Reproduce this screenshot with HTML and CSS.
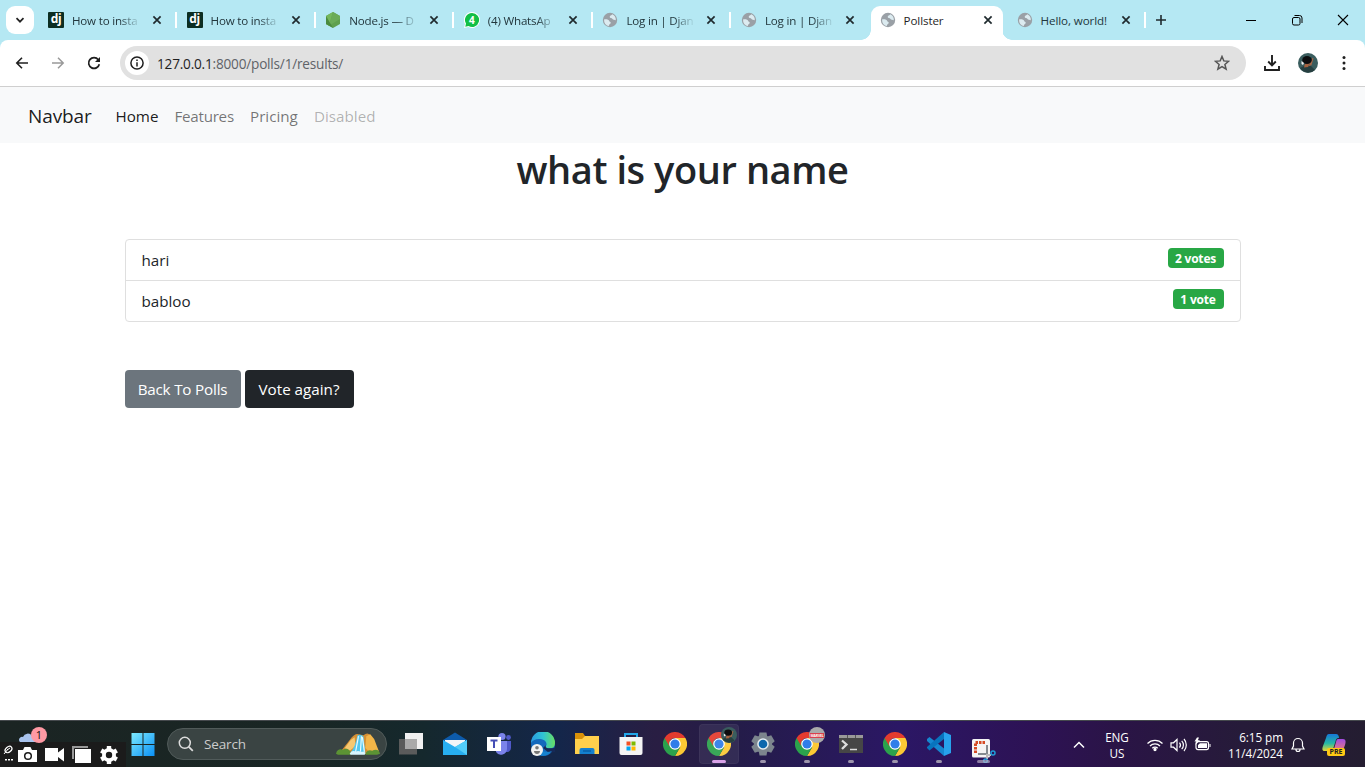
FILE: index.html
```html
<!DOCTYPE html>
<html lang="en">
<head>
<meta charset="utf-8">
<title>Pollster</title>
<link rel="stylesheet" href="styles.css">
</head>
<body>
<svg class="defs" width="0" height="0">
  <defs>
    <symbol id="close" viewBox="0 0 10 10"><path d="M1.400 1.400 8.600 8.600M8.600 1.400 1.400 8.600" fill="none" stroke="#1f2a2e" stroke-width="1.700"/></symbol>
    <symbol id="globe" viewBox="0 0 16 16"><circle cx="8" cy="8" r="7.200" fill="#9aa0a6"/><path d="M2.200 7.200C5 7 7 7.500 7.200 9c.1 1 1.600.6 1.600 1.800 0 1.200-1.800 1-2 3.200C3.600 13.600 1.700 10.500 2.200 7.200zM10.300 2.300c-.6 1.500-2.600 1.200-2.600 2.700 0 1.300 2.300.6 2.800 2 .4 1.200 2.200.4 3.300 1.300.3-2.900-1.300-5.100-3.500-6z" class="globe-land"/></symbol>
    <symbol id="chrome" viewBox="0 0 24 24">
      <path d="M22.400 6H12l5.200 9L12 24A12 12 0 0 0 22.400 6z" fill="#fcc934"/>
      <path d="M1.600 6A12 12 0 0 0 12 24l5.200-9L12 12z" fill="#2ba24c"/>
      <path d="M1.600 6A12 12 0 0 1 22.400 6H12a6 6 0 0 0-5.200 9z" fill="#e33b2e"/>
      <circle cx="12" cy="12" r="5.800" fill="#fff"/><circle cx="12" cy="12" r="4.600" fill="#2f7de9"/>
    </symbol>
    <symbol id="avatar" viewBox="0 0 20 20"><circle cx="10" cy="10" r="10" fill="#3a5d5e"/><path d="M2 15a10 10 0 0 0 15 2l-5-5-6 1z" fill="#263f40"/><path d="M6.500 12 9 8 12 10 10 14 6 14.500z" fill="#a5623f"/><path d="M12 10.500 14.500 4.800l1 .4-2 7-3 1z" fill="#a56647"/><ellipse cx="9" cy="7" rx="4.800" ry="4" fill="#0c0c0e"/><path d="m3.500 8 2.500 2-1 2-1.500-1z" fill="#eee"/></symbol>
  </defs>
</svg>

<div class="tabstrip">
  <button class="tab-search"><svg width="10" height="10" viewBox="0 0 10 10"><path d="M1.500 3.200 5 6.700l3.500-3.500" fill="none" stroke="#222" stroke-width="1.700"/></svg></button>
  <div class="tabs">
    <div class="tab"><span class="fav fav-dj">dj</span><span class="tab-title fade">How to insta</span><svg class="x"><use href="#close"/></svg></div>
    <div class="tab"><span class="fav fav-dj">dj</span><span class="tab-title fade">How to insta</span><svg class="x"><use href="#close"/></svg></div>
    <div class="tab"><svg class="fav" viewBox="0 0 16 16"><path d="M8 0 15 4v8l-7 4-7-4V4z" fill="#5fa04e"/><path d="M8 0 1 4v8l3 1.700z" fill="#74b75c"/><path d="M8 0 15 4v3L4 13.700z" fill="#6aab57"/><path d="M1 4 8 16l-7-4z" fill="#4a8a3f"/></svg><span class="tab-title fade">Node.js — D</span><svg class="x"><use href="#close"/></svg></div>
    <div class="tab"><span class="fav fav-wa"><svg viewBox="0 0 16 16"><path d="M8 0a8 8 0 1 1-3.700 15.100L0 16l1-4A8 8 0 0 1 8 0z" fill="#fff"/><path d="M8 1a7 7 0 1 1-3.500 13L1.300 14.700 2 11.600A7 7 0 0 1 8 1z" fill="#12bf45"/></svg><b>4</b></span><span class="tab-title fade">(4) WhatsAp</span><svg class="x"><use href="#close"/></svg></div>
    <div class="tab"><svg class="fav"><use href="#globe"/></svg><span class="tab-title fade">Log in | Djan</span><svg class="x"><use href="#close"/></svg></div>
    <div class="tab no-sep"><svg class="fav"><use href="#globe"/></svg><span class="tab-title fade">Log in | Djan</span><svg class="x"><use href="#close"/></svg></div>
    <div class="tab active"><svg class="fav"><use href="#globe"/></svg><span class="tab-title">Pollster</span><svg class="x"><use href="#close"/></svg></div>
    <div class="tab"><svg class="fav"><use href="#globe"/></svg><span class="tab-title">Hello, world!</span><svg class="x"><use href="#close"/></svg></div>
  </div>
  <svg class="new-tab" width="12" height="12" viewBox="0 0 12 12"><path d="M6 1v10M1 6h10" stroke="#1f2a2e" stroke-width="1.600"/></svg>
  <div class="window-controls">
    <svg width="12" height="12" viewBox="0 0 12 12"><path d="M1 6.500h10" stroke="#000"/></svg>
    <svg width="12" height="12" viewBox="0 0 12 12" fill="none" stroke="#000"><rect x="1.500" y="3.500" width="7.500" height="7.500" rx="1.500"/><path d="M3.500 1.500H8.500a2.500 2.500 0 0 1 2.500 2.500v5"/></svg>
    <svg width="12" height="12" viewBox="0 0 12 12"><path d="m1 1 10 10M11 1 1 11" stroke="#000" stroke-width="1.100"/></svg>
  </div>
</div>

<div class="toolbar-wrap">
<div class="toolbar">
  <div class="nav-buttons">
    <svg width="16" height="16" viewBox="0 0 16 16"><path d="M14 8H3M8 2.800 2.800 8 8 13.200" fill="none" stroke="#1f1f1f" stroke-width="1.600"/></svg>
    <svg width="16" height="16" viewBox="0 0 16 16"><path d="M2 8h11M8 2.800 13.200 8 8 13.200" fill="none" stroke="#999" stroke-width="1.500"/></svg>
    <svg width="16" height="16" viewBox="0 0 16 16"><path d="M13.300 9.200A5.400 5.400 0 1 1 12.300 4.700L13.300 6" fill="none" stroke="#1f1f1f" stroke-width="1.700"/><path d="M14 2v5H9z" fill="#1f1f1f"/></svg>
  </div>
  <div class="omnibox">
    <span class="site-info"><svg width="14" height="14" viewBox="0 0 14 14"><circle cx="7" cy="7" r="6.100" fill="none" stroke="#1f1f1f" stroke-width="1.500"/><path d="M7 6.200v4.200M7 3.500v1.500" stroke="#1f1f1f" stroke-width="1.500"/></svg></span>
    <span class="url"><b>127.0.0.1</b>:8000/polls/1/results/</span>
    <svg class="star" width="16" height="16" viewBox="0 0 16 16"><path d="m8 1.500 1.800 4.400 4.800.4-3.700 3.100 1.200 4.700L8 11.600l-4.100 2.500 1.200-4.700-3.700-3.100 4.800-.4z" fill="none" stroke="#555" stroke-width="1.500"/></svg>
  </div>
  <div class="tool-actions">
    <svg width="16" height="16" viewBox="0 0 16 16"><path d="M8 0v10M4.200 6.500 8 10.300l3.800-3.800M1 11v4h14v-4" fill="none" stroke="#1f1f1f" stroke-width="1.900"/></svg>
    <svg width="20" height="20"><use href="#avatar"/></svg>
    <svg width="4" height="16" viewBox="0 0 4 16" fill="#1f1f1f"><circle cx="2" cy="2.400" r="1.500"/><circle cx="2" cy="8" r="1.500"/><circle cx="2" cy="13.600" r="1.500"/></svg>
  </div>
</div>
</div>

<nav class="navbar">
  <a class="brand">Navbar</a>
  <a class="nav-link current">Home</a>
  <a class="nav-link features">Features</a>
  <a class="nav-link pricing">Pricing</a>
  <a class="nav-link disabled">Disabled</a>
</nav>
<main class="page">
  <div class="container">
    <h1>what is your name</h1>
    <ul class="list-group">
      <li><span>hari</span><span class="badge">2 votes</span></li>
      <li><span>babloo</span><span class="badge one">1 vote</span></li>
    </ul>
    <div class="actions"><a class="btn back">Back To Polls</a><a class="btn again">Vote again?</a></div>
  </div>
</main>

<footer class="taskbar">
  <div class="left-area">
    <div class="weather">
      <svg width="18" height="12" viewBox="0 0 18 12"><path d="M2 11h14" stroke="#f0a030" stroke-width="2"/><path d="M1 10a3 3 0 0 1 3-5 5 5 0 0 1 9-1l4 6z" fill="#a9c4ee"/></svg>
      <span class="count">1</span>
    </div>
    <div class="capture">
      <svg width="126" height="25" viewBox="0 0 126 25" fill="#fff">
        <ellipse cx="8.500" cy="7.500" rx="3.800" ry="2.600" transform="rotate(-40 8.500 7.500)" fill="none" stroke="#fff" stroke-width="1.300"/><path d="m4 12 4-5M7 8l3-2" stroke="#fff"/><path d="M5 17h2v1.500H5zM8 17h2v1.500H8zM11 17h2v1.500h-2z"/>
        <path d="M18 8h5l1.500-3h6L32 8h5v12H18z"/><circle cx="28" cy="14" r="3.300" fill="none" stroke="#1b1b1b" stroke-width="1.500"/>
        <path d="M45 6h13v4.500L64 6v13.500L58 15v4H45z"/>
        <path d="M72 4h16v13H72z" fill="#999"/><path d="M75 7h16v14H75z"/><path d="M74.500 20V6.500H90" fill="none" stroke="#1b1b1b"/>
        <g transform="translate(109 13)"><path d="M-2.200-9h4.400v18h-4.400z"/><path d="M-2.200-9h4.400v18h-4.400z" transform="rotate(60)"/><path d="M-2.200-9h4.400v18h-4.400z" transform="rotate(120)"/><circle r="7"/><circle r="3.200" fill="#1b1b1b"/></g>
      </svg>
    </div>
  </div>
  <svg class="start" width="24" height="24" viewBox="0 0 24 24"><defs><linearGradient id="win" x1="0" y1="0" x2="1" y2="1"><stop stop-color="#7deaff"/><stop offset="1" stop-color="#0a90f5"/></linearGradient></defs><path d="M.5 1h11v11H.5zM12.500 1h11v11h-11zM.5 13h11v11H.5zM12.500 13h11v11h-11z" fill="url(#win)"/></svg>
  <div class="search">
    <svg width="16" height="16" viewBox="0 0 16 16"><circle cx="6.800" cy="6.800" r="5.500" fill="none" stroke="#ddd" stroke-width="1.500"/><path d="m10.800 10.800 4 4" stroke="#ddd" stroke-width="1.800"/></svg>
    <span>Search</span>
    <svg class="falls" width="45" height="24" viewBox="0 0 46 24"><path d="M3 22 14 8q5-7 9-6l5 1q5-4 8 1l8 18z" fill="#d38e34"/><path d="m31 4 4-2 4 5 5 13-9 1-5-5z" fill="#f3b548"/><path d="m9 16 6-8 4-3 1 9-6 5z" fill="#f6c870"/><path d="M22 3q3-1 6 1l2 17H15q5-7 7-18z" fill="#53c7ed"/><path d="M23 4 20 20M26 4l-1 16M27 5l2 15" stroke="#e8fbff" stroke-width="1.200"/><path d="M0 22c1-5 5-5 7-4 4-3 8 0 9 5H2zM30 23c1-5 5-5 7-4 4-3 8 0 8 3l-3 1z" fill="#5c9334"/><path d="M14 22c2-4 5-3 6-2 3-2 5 0 6 0 4-1 5 2 3 3H15z" fill="#d9f6ff"/></svg>
  </div>
  <div class="apps">
    <div class="app"><svg viewBox="0 0 24 24"><path d="M6 1h18v16H6z" fill="#f1f1f1"/><path d="M0 7h18v15.500H0z" fill="#5a5b5b"/><path d="M6 7h12v10H6z" fill="#aaa"/></svg></div>
    <div class="app"><svg viewBox="0 0 24 24"><path d="M0 8 12 .5 24 8v6H0z" fill="#0d5bab"/><path d="M2 8h20v10H2z" fill="#f4f6f8"/><path d="M0 8v15h24V8L12 15z" fill="#27aef0"/><path d="m12 15 12 8V8z" fill="#52cdf9"/></svg></div>
    <div class="app"><svg viewBox="0 0 24 24"><circle cx="15" cy="4.500" r="3.600" fill="#7b83eb"/><circle cx="21.500" cy="5.500" r="2.400" fill="#5059c9"/><path d="M17 9h7v7a4 4 0 0 1-6 3.500z" fill="#5059c9"/><path d="M9 9h11v8a6 6 0 0 1-11 3z" fill="#7b83eb"/><path d="M0 5h14v14H0z" fill="#fff"/><path d="M3.500 8.500h7M7 8.500V16" stroke="#454db5" stroke-width="2"/></svg></div>
    <div class="app"><svg viewBox="0 0 24 24"><defs><linearGradient id="edge"><stop stop-color="#2a9ae0"/><stop offset=".5" stop-color="#2fc3d5"/><stop offset="1" stop-color="#67df62"/></linearGradient></defs><circle cx="12" cy="12" r="12" fill="#1469bd"/><path d="M0 11A12 12 0 0 1 24 11c0 5-4 6-8 5-2-1-1-2-.5-3C16 9 12 7 8 7S1 9 0 11z" fill="url(#edge)"/><path d="M15 13c-1 2-1 4 8 3l2 1-1 3-6 1-6-5z" fill="#162957"/><path d="M9 11c-3 6 3 11 12 8A12 12 0 0 1 8 23z" fill="#1682cf"/><circle cx="6" cy="18" r="6" fill="#f2f2f2"/><circle cx="6" cy="15.700" r="1.800" fill="#777"/><path d="M3 19h6c0 4-6 4-6 0z" fill="#777"/></svg></div>
    <div class="app"><svg viewBox="0 0 24 24"><path d="M0 1h8l2 3h14v8H0z" fill="#d99108"/><path d="M0 7h7l3-3h14v18H0z" fill="#ffd04c"/><path d="M4.500 22v-4a2 2 0 0 1 2-2h11a2 2 0 0 1 2 2v4z" fill="#1480cf"/><path d="M8 19h8" stroke="#095fa9" stroke-width="1.500"/></svg></div>
    <div class="app"><svg viewBox="0 0 24 24"><path d="M6 6V2h12v4" fill="none" stroke="#22a7e9" stroke-width="2"/><path d="M.5 5h23v16a2 2 0 0 1-2 2h-19a2 2 0 0 1-2-2z" fill="#f4f4f4"/><path d="M7.500 9.500h4v4h-4z" fill="#f25022"/><path d="M12.500 9.500h4v4h-4z" fill="#7fba00"/><path d="M7.500 14.500h4v4h-4z" fill="#00a4ef"/><path d="M12.500 14.500h4v4h-4z" fill="#ffb900"/></svg></div>
    <div class="app"><svg><use href="#chrome"/></svg></div>
    <div class="app selected"><svg><use href="#chrome"/></svg><svg class="mini"><use href="#avatar"/></svg><i></i></div>
    <div class="app"><svg viewBox="0 0 24 24"><g transform="translate(12 12)" fill="#7c858d"><path id="tooth" d="M-3.500-11.500h7L4.500-6h-9z"/><use href="#tooth" transform="rotate(60)"/><use href="#tooth" transform="rotate(120)"/><use href="#tooth" transform="rotate(180)"/><use href="#tooth" transform="rotate(240)"/><use href="#tooth" transform="rotate(300)"/><circle r="9"/><circle r="5.800" fill="#e5edf2"/><circle r="4.300" fill="#0d67ad"/></g></svg><i></i></div>
    <div class="app"><svg><use href="#chrome"/></svg><span class="mini marvel"><b>MARVEL</b></span><i></i></div>
    <div class="app"><svg viewBox="0 0 24 24"><path d="M0 3h24v18H0z" fill="#464646"/><path d="M0 3h24v3H0z" fill="#999"/><path d="M8 3h1v3H8zM16 3h1v3h-1z" fill="#555"/><path d="m3 8.500 4.500 4L3 17" fill="none" stroke="#ddd" stroke-width="2.300"/><path d="M11 17.500h7" stroke="#ddd" stroke-width="1.500"/></svg><i></i></div>
    <div class="app"><svg><use href="#chrome"/></svg><i></i></div>
    <div class="app"><svg viewBox="0 0 24 24"><path d="m0 7 2.500-2L17 16.500V24L0 9z" fill="#1687d0"/><path d="m0 16 2.500 2.500L17 7V0L0 15z" fill="#0874bd"/><path d="m17 0 7 3v18l-7 3z" fill="#27a2ec"/></svg><i></i></div>
    <div class="app"><svg class="snip" viewBox="0 0 24 24"><rect width="18" height="18.500" rx="1.500" fill="#f4f4f4"/><path d="M3.500 14V3.500H14" fill="none" stroke="#d54a25" stroke-width="3" stroke-dasharray="2.500 1"/><path d="M6 15h9V6" fill="none" stroke="#858b90" stroke-width="2"/><path d="M15 15v5M15 16h4" stroke="#bbb" stroke-width="2"/><circle cx="13.500" cy="21.800" r="1.800" fill="none" stroke="#209bd8" stroke-width="1.500"/><circle cx="21" cy="14" r="2" fill="none" stroke="#209bd8" stroke-width="1.500"/></svg><i class="wide"></i></div>
  </div>
  <div class="tray">
    <svg class="chev" width="12" height="12" viewBox="0 0 12 12"><path d="m1 8.500 5-5 5 5" fill="none" stroke="#fff" stroke-width="1.500"/></svg>
    <div class="lang"><span>ENG</span><span>US</span></div>
    <div class="status">
      <svg width="16" height="16" viewBox="0 0 16 16" fill="none" stroke="#fff" stroke-width="1.300"><path d="M.5 6.500a10.500 10.500 0 0 1 15 0M3 9a7 7 0 0 1 10 0M5.300 11.300a3.800 3.800 0 0 1 5.400 0"/><circle cx="8" cy="12.500" r="1" fill="#fff"/></svg>
      <svg width="17" height="16" viewBox="0 0 17 16" fill="none" stroke="#fff" stroke-width="1.200"><path d="M1 5.800h2.500L7 2.500v11l-3.500-3.300H1zM9.500 5.500a4 4 0 0 1 0 5M11.700 3.800a6 6 0 0 1 0 8.400M14 2a9 9 0 0 1 0 12"/></svg>
      <svg width="17" height="16" viewBox="0 0 17 16"><rect x="2" y="4.600" width="12.500" height="8" rx="2" fill="none" stroke="#fff" stroke-width="1.200"/><path d="M6 6.200h7v4.800H4V8z" fill="#fff"/><path d="M15.500 7h1v3h-1z" fill="#fff"/><path d="m3 .5-2.500 4h2L1.500 8 6 3.300H3.800L5 .5z" fill="#fff"/></svg>
    </div>
    <div class="clock"><span>6:15 pm</span><span>11/4/2024</span></div>
    <svg class="bell" width="14" height="16" viewBox="0 0 14 16" fill="none" stroke="#fff" stroke-width="1.200"><path d="M1 12h12l-1.500-3V6a4.500 4.500 0 0 0-9 0v3zM5 12.500a2 2 0 0 0 4 0"/></svg>
    <div class="copilot"><svg width="24" height="24" viewBox="0 0 24 24"><defs><linearGradient id="cpa" x2="0" y2="1"><stop stop-color="#1678d8"/><stop offset=".55" stop-color="#25b7a5"/><stop offset="1" stop-color="#e7d935"/></linearGradient><linearGradient id="cpb" x2="0" y2="1"><stop stop-color="#a14be1"/><stop offset="1" stop-color="#f88969"/></linearGradient></defs><path d="M16 6h5c3 0 3 3 2 6l-3 8H8c3 0 3-2 4-4l2-7c.6-2 .8-3 2-3z" fill="url(#cpb)"/><path d="M7 1h7c2 0 3 2 3 4-3 0-3 2-3.500 3.500L11 16c-.6 2-2 2-4 2H3c-3 0-3-2-2-5l3-8c.6-2 1-4 3-4z" fill="url(#cpa)"/></svg><b>PRE</b></div>
  </div>
</footer>
</body>
</html>
```
FILE: styles.css
```css
* { box-sizing: border-box; }
body { margin: 0; width: 1365px; height: 767px; overflow: hidden; display: flex; flex-direction: column; background: #fff; font-family: "Open Sans", "Noto Sans", sans-serif; color: #212529; }
svg { display: block; flex: none; }
.defs { position: absolute; }

/* Browser tab strip */
.tabstrip { height: 40px; flex: none; display: flex; align-items: center; background: #b5e8f3; padding-left: 6px; }
.tab-search { width: 28px; height: 28px; padding: 0; border: 0; border-radius: 9px; background: #fff; display: flex; align-items: center; justify-content: center; }
.tabs { display: flex; height: 40px; margin-left: 4px; align-items: flex-end; }
.tab { position: relative; width: 138.600px; height: 34px; padding: 0 14px 6px 10px; display: flex; align-items: center; font-size: 11.600px; letter-spacing: -.1px; color: #22363c; }
.tab::after { content: ""; position: absolute; right: -.5px; top: 6px; width: 2px; height: 16px; background: #fff; }
.no-sep::after { display: none; }
.fav { width: 16px; height: 16px; flex: none; }
.fav-dj { background: #0c2e22; color: #fff; border-radius: 1px; font: bold 12px/14px "Open Sans", sans-serif; text-align: center; letter-spacing: -.3px; }
.fav-wa { position: relative; }
.fav-wa b { position: absolute; inset: 0; color: #fff; font-size: 10px; line-height: 16px; text-align: center; }
.globe-land { fill: #dcebf0; }
.tab-title { width: 68px; margin-left: 8px; padding-top: 2px; white-space: nowrap; line-height: 18px; }
.fade { letter-spacing: -.2px; -webkit-mask-image: linear-gradient(90deg, #000 70%, transparent 102%); mask-image: linear-gradient(90deg, #000 70%, transparent 102%); }
.x { width: 10px; height: 10px; margin-left: 12px; }
.active { width: 137px; color: #1f1f1f; }
.active .x { margin-left: 11px; }
.active::before { content: ""; position: absolute; left: -9px; right: -5px; bottom: 0; height: 10px; background: radial-gradient(circle at 0 0, transparent 9.500px, #fff 10px) 0 0 / 10px 10px no-repeat, radial-gradient(circle at 10px 0, transparent 9.500px, #fff 10px) 100% 0 / 10px 10px no-repeat; }
.active > * { position: relative; z-index: 2; }
.active::after { left: 1.400px; right: auto; top: 0; width: 132px; height: 34px; border-radius: 9px 9px 0 0; z-index: 1; }
.new-tab { margin-left: 10px; }
.window-controls { margin-left: auto; display: flex; gap: 34px; padding-right: 16px; }

/* Address bar */
.toolbar-wrap { flex: none; background: #b5e8f3; }
.toolbar { height: 47px; border-bottom: 1px solid #cfcfcf; border-radius: 8px 8px 0 0; background: #fff; display: flex; align-items: center; padding-left: 14px; }
.nav-buttons { display: flex; gap: 20px; width: 106px; }
.omnibox { width: 1126px; height: 34px; border-radius: 17px; background: #e1e1e1; display: flex; align-items: center; padding: 0 16px 0 5px; }
.site-info { width: 24px; height: 24px; border-radius: 50%; background: #fff; display: flex; align-items: center; justify-content: center; }
.url { margin-left: 8px; font-size: 13.600px; letter-spacing: -.2px; color: #5f6368; }
.url b { font-weight: 400; color: #1f1f1f; }
.star { margin-left: auto; }
.tool-actions { display: flex; align-items: center; margin-left: 18px; gap: 18px; }
.tool-actions svg:last-child { margin-left: 6px; }

/* Site navigation */
.navbar { height: 56px; flex: none; background: #f8f9fa; display: flex; align-items: center; padding: 1px 28px 0; font-size: 15.200px; color: rgba(0,0,0,.55); }
.brand { font-size: 19px; letter-spacing: -.1px; width: 87.500px; color: rgba(0,0,0,.9); }
.nav-link.current { width: 59px; color: rgba(0,0,0,.9); }
.features { width: 75.500px; letter-spacing: -.27px; }
.pricing { width: 64px; }
.disabled { color: rgba(0,0,0,.3); }

/* Poll results */
.page { flex: 1; }
.container { width: 1140px; margin: 0 auto; padding: 0 12px; }
h1 { margin: 0 0 48px; padding-top: 2px; font-size: 38px; line-height: 48px; height: 48px; font-weight: 600; letter-spacing: -.43px; text-align: center; }
.list-group { list-style: none; margin: 0 0 48px; padding: 0; border: 1px solid #dfdfdf; border-radius: 4px; }
.list-group li { display: flex; justify-content: space-between; height: 40px; padding: 8px 16px; font-size: 15.200px; line-height: 25px; }
.list-group li + li { border-top: 1px solid #dfdfdf; height: 41px; }
.badge { height: 20px; width: 56px; border-radius: 4px; background: #28a745; color: #fff; font-weight: 700; font-size: 12px; line-height: 21px; text-align: center; letter-spacing: -.2px; }
.badge.one { width: 51px; }
.actions { display: flex; gap: 4px; }
.btn { height: 38px; border-radius: 4px; color: #fff; font-size: 15.200px; line-height: 39px; text-align: center; white-space: nowrap; }
.back { width: 116px; background: #6c757d; letter-spacing: -.18px; }
.again { width: 109px; background: #212529; }

/* Taskbar */
.taskbar { position: relative; height: 47px; flex: none; display: flex; align-items: center; border-top: 1px solid #45494d; background: linear-gradient(90deg, #1b2423 0, #192624 22%, #15282d 31%, #14264a 41%, #291e43 48%, #241c49 54%, #2b1765 66%, #2d1254 76%, #2a1446 82%, #261b39 91%, #241d31 100%); color: #fff; }
.left-area { width: 126px; height: 46px; display: flex; flex-direction: column; }
.weather { height: 21px; display: flex; padding: 11px 0 0 19px; }
.count { width: 16px; height: 16px; margin: -5px 0 0 -6px; border-radius: 50%; background: #ff99a4; color: #111; font-size: 11px; line-height: 16px; text-align: center; z-index: 1; }
.capture { background: #1b1b1b; z-index: 0; }
.start { margin-left: 5px; }
.search { width: 220px; height: 32px; margin-left: 12px; border-radius: 16px; border: 1px solid #515b5a; background: #3a4443; display: flex; align-items: center; padding: 0 5px 0 10px; font-size: 13.500px; color: #ccc; }
.search span { margin-left: 10px; letter-spacing: -.15px; }
.falls { margin-left: auto; }
.apps { display: flex; margin-left: 2px; }
.app { position: relative; width: 44px; height: 46px; display: flex; align-items: center; justify-content: center; }
.app > svg { width: 24px; height: 24px; }
.app i { position: absolute; bottom: 4px; left: 19px; width: 6px; height: 3px; border-radius: 2px; background: #9c94ab; }
.selected::before { content: ""; position: absolute; inset: 3px 2px; border-radius: 4px; background: rgba(255,255,255,.07); border: 1px solid rgba(255,255,255,.04); }
.app.selected i { left: 15px; width: 14px; background: #d9a2e8; }
.app > .mini { position: absolute; left: 24px; top: 6px; width: 16px; height: 16px; }
.marvel { border-radius: 50%; background: #aaa; display: flex; align-items: center; justify-content: center; }
.marvel b { background: #d9404c; color: #fff; font-size: 3.500px; line-height: 5px; letter-spacing: -.2px; }
.app > .snip { margin: 14px 0 0 2px; }
.app i.wide { left: 16px; width: 13px; background: rgba(190,180,200,.65); }
.tray { flex: 1; display: flex; align-items: center; margin-left: 68px; padding-top: 1px; font-size: 11.700px; line-height: 16px; letter-spacing: -.05px; }
.lang { width: 32px; margin-left: 16px; display: flex; flex-direction: column; text-align: center; }
.status { display: flex; gap: 7px; margin-left: 14px; }
.clock { width: 60px; margin-left: 12px; display: flex; flex-direction: column; text-align: right; }
.bell { margin-left: 8px; }
.copilot { position: relative; margin-left: 17px; }
.copilot b { position: absolute; left: 5px; bottom: 1px; width: 18px; height: 8px; border-radius: 2px; background: #ffc914; color: #222; font-size: 7px; line-height: 8px; text-align: center; letter-spacing: 0; }
```
